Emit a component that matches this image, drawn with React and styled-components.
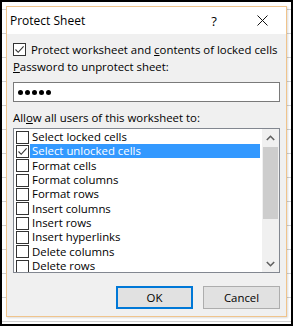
import React from "react";
import styled, { createGlobalStyle } from "styled-components";

const GlobalStyle = createGlobalStyle`
  html, body {
    margin: 0;
    padding: 0;
    background: #fff;
  }
  * {
    box-sizing: border-box;
  }
`;

const permissions = [
  { label: "Select locked cells", checked: false },
  { label: "Select unlocked cells", checked: true, selected: true },
  { label: "Format cells", checked: false },
  { label: "Format columns", checked: false },
  { label: "Format rows", checked: false },
  { label: "Insert columns", checked: false },
  { label: "Insert rows", checked: false },
  { label: "Insert hyperlinks", checked: false },
  { label: "Delete columns", checked: false },
  { label: "Delete rows", checked: false },
];

const Check = () => (
  <svg width="11" height="11" viewBox="0 0 11 11">
    <path d="M1.5 5.5 L4.2 8.3 L9.6 2.4" fill="none" stroke="#333" strokeWidth="1.1" />
  </svg>
);

const CheckBox = ({ checked }) => <Box>{checked && <Check />}</Box>;

const App = () => {
  return (
    <>
      <GlobalStyle />
      <Frame>
        <Dialog>
          <TitleBar>
            <Title>Protect Sheet</Title>
            <Help>?</Help>
            <Close>
              <svg width="11" height="11" viewBox="0 0 11 11">
                <path d="M0.5 0.5 L10.5 10.5 M10.5 0.5 L0.5 10.5" stroke="#111" strokeWidth="1" />
              </svg>
            </Close>
          </TitleBar>
          <Body>
            <CheckRow>
              <CheckBox checked />
              <span>
                Protect worksheet and <u>c</u>ontents of locked cells
              </span>
            </CheckRow>
            <Label top={3}>
              <u>P</u>assword to unprotect sheet:
            </Label>
            <Input>
              {[0, 1, 2, 3, 4].map((i) => (
                <Dot key={i} />
              ))}
            </Input>
            <Label top={8}>
              All<u>o</u>w all users of this worksheet to:
            </Label>
            <ListBox>
              <Items>
                {permissions.map((p) => (
                  <Item key={p.label}>
                    <CheckBox checked={p.checked} />
                    <ItemText selected={p.selected}>{p.label}</ItemText>
                  </Item>
                ))}
              </Items>
              <ScrollBar>
                <Arrow>
                  <svg width="9" height="6" viewBox="0 0 9 6">
                    <path d="M0.8 5 L4.5 1.3 L8.2 5" fill="none" stroke="#606060" strokeWidth="1.6" />
                  </svg>
                </Arrow>
                <Track>
                  <Thumb />
                </Track>
                <Arrow>
                  <svg width="9" height="6" viewBox="0 0 9 6">
                    <path d="M0.8 1 L4.5 4.7 L8.2 1" fill="none" stroke="#606060" strokeWidth="1.6" />
                  </svg>
                </Arrow>
              </ScrollBar>
            </ListBox>
            <Buttons>
              <Button primary>OK</Button>
              <Button>Cancel</Button>
            </Buttons>
          </Body>
        </Dialog>
      </Frame>
    </>
  );
};

export default App;

const Frame = styled.div`
  width: 293px;
  height: 326px;
  border: 2px solid #000;
  padding: 4px 4px 0 4px;
  background-color: #fff;
  background-image: repeating-linear-gradient(
    to bottom,
    transparent 0px,
    transparent 7px,
    #d0d0d0 7px,
    #d0d0d0 8px,
    transparent 8px,
    transparent 24px
  );
  font-family: "Open Sans", "Noto Sans", sans-serif;
  font-size: 11.4px;
  color: #000;
`;

const Dialog = styled.div`
  width: 281px;
  height: 311px;
  border: 1px solid #f0c48c;
  box-shadow: 1px 1px 2px rgba(0, 0, 0, 0.15);
  background: #f0f0f0;
  display: flex;
  flex-direction: column;
`;

const TitleBar = styled.div`
  height: 27px;
  background: #fff;
  display: flex;
  align-items: center;
`;

const Title = styled.div`
  flex: 1;
  padding-left: 3px;
  font-size: 12px;
  padding-bottom: 1px;
`;

const Help = styled.div`
  width: 14px;
  font-size: 13px;
  margin-right: 36px;
  text-align: center;
`;

const Close = styled.div`
  width: 11px;
  margin-right: 18px;
  display: flex;
`;

const Body = styled.div`
  flex: 1;
  padding: 9px 0 0 6px;
  display: flex;
  flex-direction: column;
`;

const CheckRow = styled.div`
  display: flex;
  align-items: center;
  gap: 5px;
  height: 13px;
  white-space: nowrap;
`;

const Box = styled.div`
  width: 13px;
  height: 13px;
  flex: none;
  border: 1px solid #333;
  background: #fff;
  display: flex;
  align-items: center;
  justify-content: center;
`;

const Label = styled.div`
  margin-top: ${(p) => p.top}px;
  height: 15px;
  line-height: 15px;
  white-space: nowrap;
`;

const Input = styled.div`
  margin-top: 8px;
  width: 267px;
  height: 20px;
  border: 1px solid #7a7a7a;
  background: #fff;
  padding-left: 4px;
  display: flex;
  align-items: center;
  gap: 2px;
`;

const Dot = styled.span`
  width: 5px;
  height: 5px;
  border-radius: 50%;
  background: #000;
`;

const ListBox = styled.div`
  margin-top: 3px;
  width: 267px;
  height: 145px;
  border: 1px solid #828790;
  background: #fff;
  display: flex;
  overflow: hidden;
`;

const Items = styled.div`
  flex: 1;
  padding: 1px 2px 0 2px;
  overflow: hidden;
`;

const Item = styled.div`
  height: 14.33px;
  display: flex;
  align-items: center;
  gap: 1px;
  white-space: nowrap;
`;

const ItemText = styled.div`
  flex: 1;
  height: 14px;
  line-height: 14px;
  padding-left: 2px;
  background: ${(p) => (p.selected ? "#3399ff" : "transparent")};
  color: ${(p) => (p.selected ? "#fff" : "#000")};
`;

const ScrollBar = styled.div`
  width: 17px;
  flex: none;
  background: #f0f0f0;
  display: flex;
  flex-direction: column;
`;

const Arrow = styled.div`
  height: 17px;
  display: flex;
  align-items: center;
  justify-content: center;
`;

const Track = styled.div`
  flex: 1;
  padding: 1px 1px;
`;

const Thumb = styled.div`
  height: 72px;
  background: #cdcdcd;
`;

const Buttons = styled.div`
  margin-top: 13px;
  width: 267px;
  display: flex;
  justify-content: flex-end;
  gap: 10px;
`;

const Button = styled.div`
  width: 77px;
  height: 23px;
  background: #e1e1e1;
  border: ${(p) => (p.primary ? "2px solid #0078d7" : "1px solid #adadad")};
  display: flex;
  align-items: center;
  justify-content: center;
  font-size: 11.4px;
`;
